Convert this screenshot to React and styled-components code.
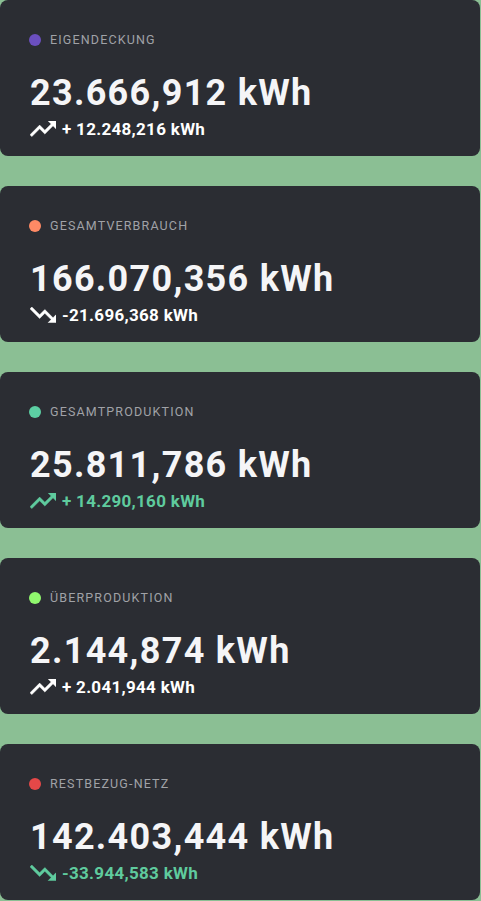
import styled, { createGlobalStyle } from "styled-components";

const Global = createGlobalStyle`
  html, body { margin:0; padding:0; background:#8bbf94; }
  body { font-family: Roboto, "Noto Sans", sans-serif; }
`;

const List = styled.div`
  display:flex; flex-direction:column; gap:30px;
  width:480px; padding-bottom:1px;
`;

const Card = styled.section`
  background:#2b2d33; border-radius:8px; height:156px; box-sizing:border-box;
  padding:34px 30px 0 29px; display:flex; flex-direction:column;
`;

const Label = styled.div`
  display:flex; align-items:center; gap:9px;
  font-size:12.5px; letter-spacing:1.15px; color:#a0a2a7; text-transform:uppercase;
  line-height:12px;
`;

const Dot = styled.span`
  width:12px; height:12px; border-radius:50%; background:${p => p.$color}; flex:none;
`;

const Value = styled.div`
  margin-top:29px; padding-left:1px; font-size:36px; font-weight:700; color:#f5f5f7;
  letter-spacing:1.3px; line-height:36px;
`;

const Trend = styled.div`
  margin-top:9px; padding-left:1px; display:flex; align-items:center; gap:6px;
  font-size:17px; font-weight:700; color:${p => p.$color}; line-height:18px;
  letter-spacing:0.3px;
  svg { flex:none; }
`;

const up = "M16 6l2.29 2.29-4.88 4.88-4-4L2 16.59 3.41 18l6-6 4 4 6.3-6.29L22 12V6z";
const down = "M16 18l2.29-2.29-4.88-4.88-4 4L2 7.41 3.41 6l6 6 4-4 6.3 6.29L22 12v6z";

const TrendIcon = ({ dir }) => (
  <svg width="26" height="15.6" viewBox="2 6 20 12" fill="currentColor" stroke="currentColor" strokeWidth="0.4">
    <path d={dir === "up" ? up : down} />
  </svg>
);

const items = [
  { label: "Eigendeckung", dot: "#6b4fbf", value: "23.666,912 kWh", dir: "up", delta: "+ 12.248,216 kWh", good: false },
  { label: "Gesamtverbrauch", dot: "#ff8a65", value: "166.070,356 kWh", dir: "down", delta: "-21.696,368 kWh", good: false },
  { label: "Gesamtproduktion", dot: "#5ccfa3", value: "25.811,786 kWh", dir: "up", delta: "+ 14.290,160 kWh", good: true },
  { label: "Überproduktion", dot: "#90f86e", value: "2.144,874 kWh", dir: "up", delta: "+ 2.041,944 kWh", good: false },
  { label: "Restbezug-Netz", dot: "#e54848", value: "142.403,444 kWh", dir: "down", delta: "-33.944,583 kWh", good: true },
];

export default function App() {
  return (
    <>
      <Global />
      <List>
        {items.map(it => (
          <Card key={it.label}>
            <Label><Dot $color={it.dot} />{it.label}</Label>
            <Value>{it.value}</Value>
            <Trend $color={it.good ? "#5fcb9e" : "#ffffff"}>
              <TrendIcon dir={it.dir} />
              {it.delta}
            </Trend>
          </Card>
        ))}
      </List>
    </>
  );
}
